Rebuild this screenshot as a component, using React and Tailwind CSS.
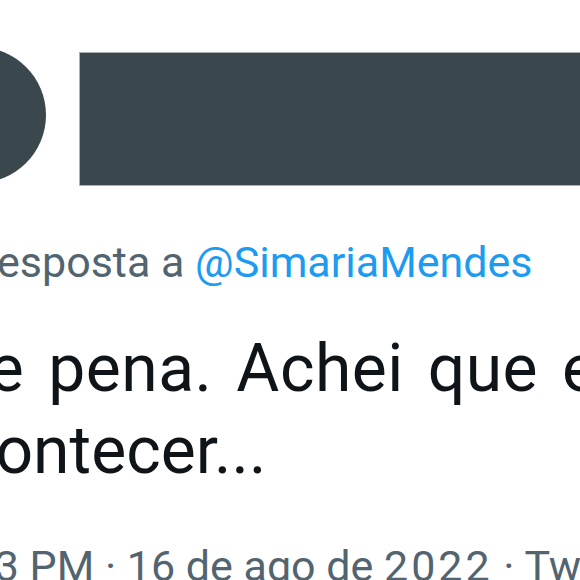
export default function App() {
  return (
    <div className="w-[580px] h-[580px] overflow-hidden bg-white font-['Roboto',sans-serif]">
      <div className="flex items-start pt-[47px]">
        <div className="w-[136px] h-[136px] shrink-0 rounded-full bg-[#3a474d] ml-[-90px]" />
        <div className="h-[134px] flex-1 mt-[5px] ml-[33px] bg-[#3a474d] border border-[#a9b0b3] border-r-0" />
      </div>

      <div className="mt-[55px] ml-[-90px] whitespace-nowrap text-[43px] leading-none text-[#536471]">
        Em resposta a <span className="text-[#1d9bf0]">@SimariaMendes</span>
      </div>

      <div className="mt-[44px] whitespace-nowrap text-[66px] leading-[82px] text-[#0f1419]">
        <div className="ml-[-94px] tracking-[0.5px] [word-spacing:7px]">Que pena. Achei que ele ia</div>
        <div className="ml-[-75px]">acontecer...</div>
      </div>

      <div className="mt-[53px] ml-[-64px] whitespace-nowrap text-[43px] leading-none text-[#536471]">
        8:33 PM · 16 de ago de <span className="tracking-[3px]">2022</span> · Twitter for iPhone
      </div>
    </div>
  );
}
